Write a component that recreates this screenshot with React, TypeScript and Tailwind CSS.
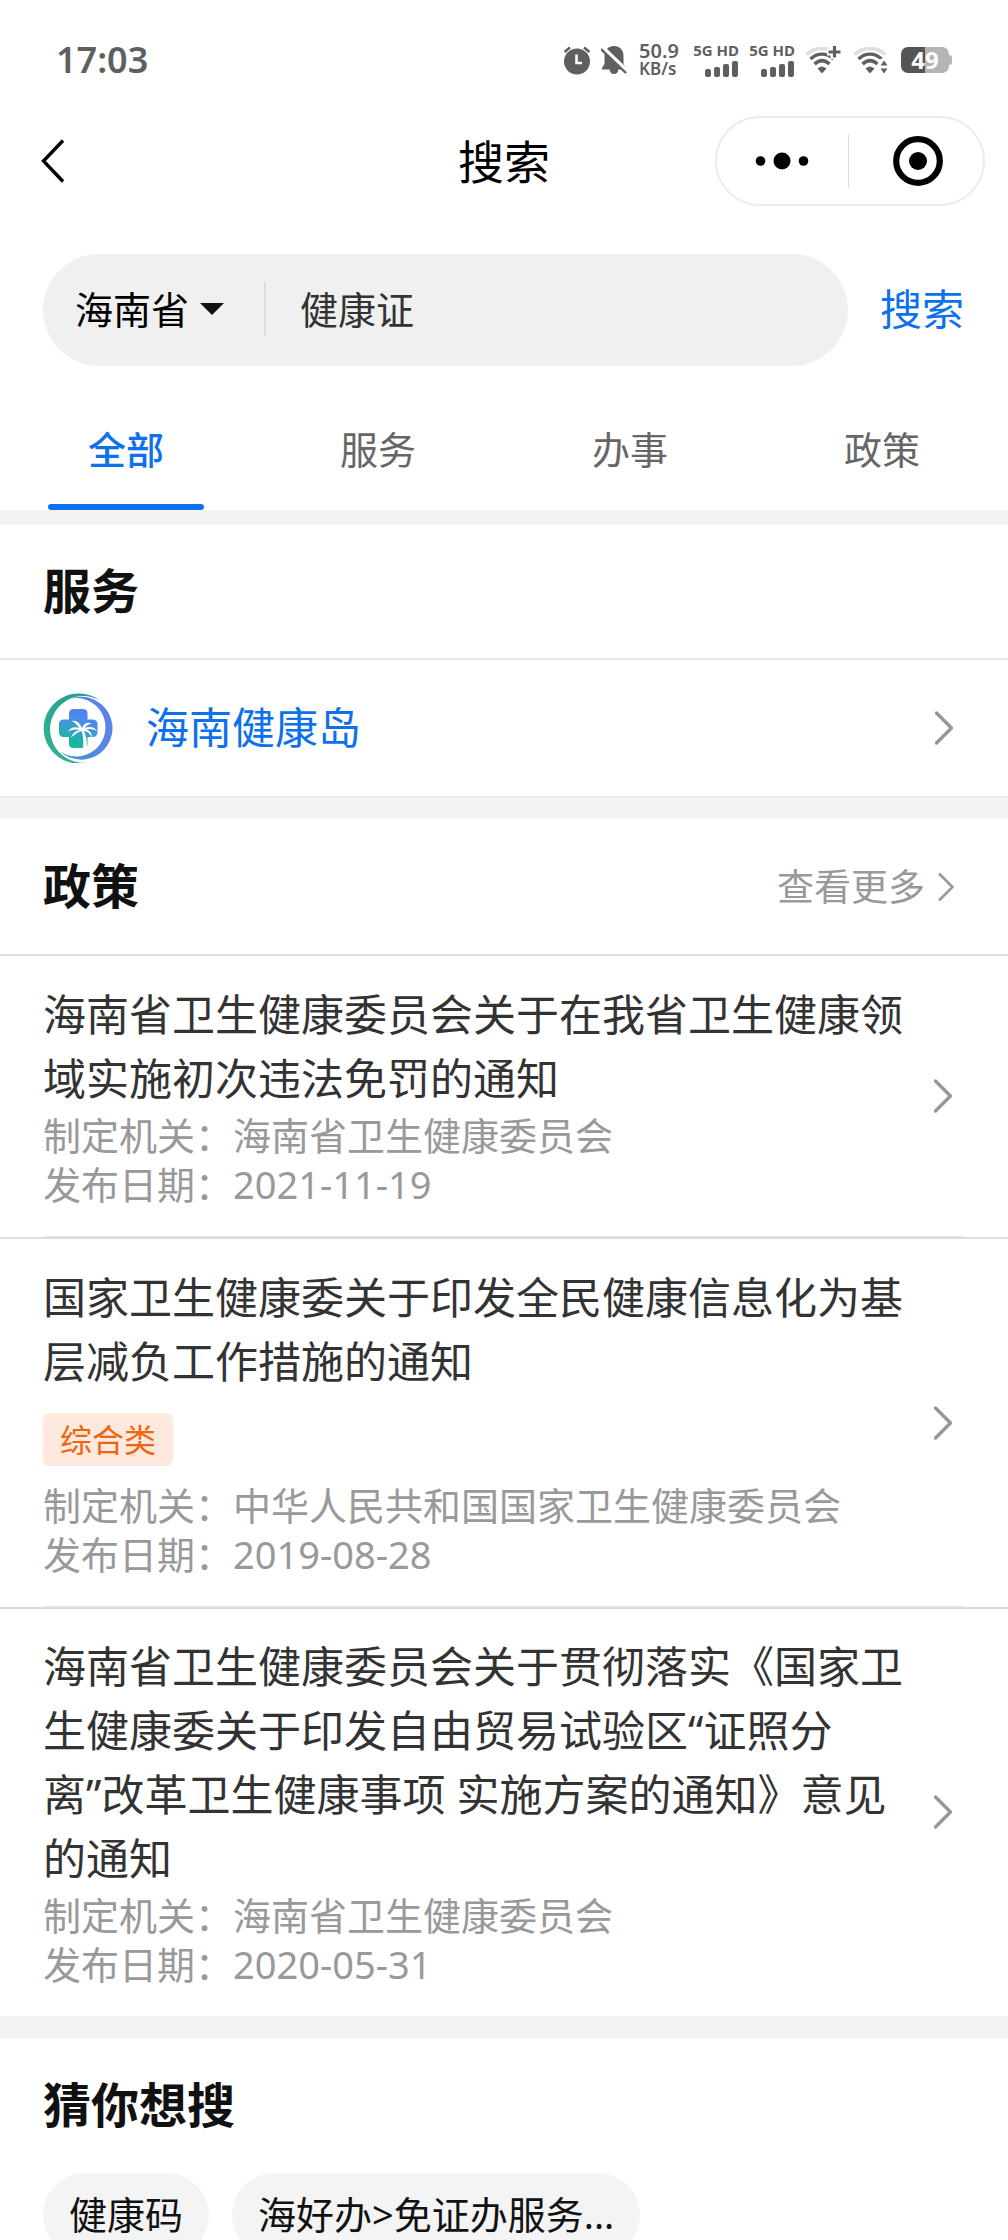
import { useState } from 'react'

type Policy = {
  title: string
  tag?: string
  agency: string
  date: string
}

const TABS = ['全部', '服务', '办事', '政策']

// The word joiner (\u2060) keeps a closing quote on the same line as the text after it.
const POLICIES: Policy[] = [
  {
    title: '海南省卫生健康委员会关于在我省卫生健康领域实施初次违法免罚的通知',
    agency: '海南省卫生健康委员会',
    date: '2021-11-19',
  },
  {
    title: '国家卫生健康委关于印发全民健康信息化为基层减负工作措施的通知',
    tag: '综合类',
    agency: '中华人民共和国国家卫生健康委员会',
    date: '2019-08-28',
  },
  {
    title:
      '海南省卫生健康委员会关于贯彻落实《国家卫生健康委关于印发自由贸易试验区“证照分离”\u2060改革卫生健康事项 实施方案的通知》意见的通知',
    agency: '海南省卫生健康委员会',
    date: '2020-05-31',
  },
]

const SUGGESTIONS = ['健康码', '海好办>免证办服务...']

function AlarmIcon() {
  return (
    <svg className="h-8 w-7" viewBox="0 0 28 32" fill="none" aria-hidden="true">
      <circle cx="14" cy="17.500" r="13" fill="#5f5f5f" />
      <path d="M1.500 8 7 3.500M26.500 8 21 3.500" stroke="#5f5f5f" strokeWidth="2.500" />
      <path d="M13.500 10.500v8.500H19" stroke="#fff" strokeWidth="2.600" />
    </svg>
  )
}

function MutedBellIcon() {
  return (
    <svg className="h-8 w-7" viewBox="0 0 28 32" fill="none" aria-hidden="true">
      <path
        d="M13 2C7.500 2 3.500 6 3.500 11.500V20L1 24v1.500h7.500c.5 3 2.200 4.500 4.500 4.500s4-1.500 4.500-4.500H25V24l-2.500-4v-8.500C22.500 6 18.500 2 13 2Z"
        fill="#5f5f5f"
      />
      <path d="M1 3.500 26 27.500" stroke="#fff" strokeWidth="5" />
      <path d="M0 5 25 29" stroke="#5f5f5f" strokeWidth="2.400" />
    </svg>
  )
}

function CellSignal() {
  return (
    <div className="flex w-[46px] flex-col items-end gap-1">
      <span className="text-[15px] leading-[14px] font-bold whitespace-nowrap">5G HD</span>
      <svg className="h-4 w-[34px]" viewBox="0 0 34 16" fill="#5f5f5f" aria-hidden="true">
        <rect x="0" y="8" width="6" height="8" rx="2" />
        <rect x="9" y="6" width="6" height="10" rx="2" />
        <rect x="18" y="3" width="6" height="13" rx="2" />
        <rect x="27" y="0" width="6" height="16" rx="2" />
      </svg>
    </div>
  )
}

function WifiIcon({ badge }: { badge: 'plus' | 'arrows' }) {
  return (
    <svg className="h-8 w-[38px]" viewBox="0 0 38 32" fill="none" aria-hidden="true">
      <path d="M1.500 10.500C10 2.500 24 2.500 32.500 10.500" stroke="#dedede" strokeWidth="3.600" />
      <path d="M5.500 15C12.500 8.500 21.500 8.500 28.500 15" stroke="#5f5f5f" strokeWidth="3.400" />
      <path d="M9.500 20C14.500 15.500 19.500 15.500 24.500 20" stroke="#5f5f5f" strokeWidth="3.400" />
      <path d="M12.500 24.500C15.500 22 18.500 22 21.500 24.500L17 29.500Z" fill="#5f5f5f" />
      {badge === 'plus' ? (
        <>
          <path d="M29 1v14M22 8h13" stroke="#fff" strokeWidth="7" />
          <path d="M29.500 2v11.500M23.500 8h12" stroke="#5f5f5f" strokeWidth="3.200" />
        </>
      ) : (
        <>
          <path d="M25 15h11v16H25Z" fill="#fff" />
          <path d="M31 16.500 34.500 21.500h-7ZM31 29.500 27.500 24.500h7Z" fill="#5f5f5f" />
        </>
      )}
    </svg>
  )
}

function Battery() {
  return (
    <div className="flex items-center">
      <div className="flex h-[26px] w-12 items-center justify-center rounded-[7px] bg-linear-to-r from-[#555] from-50% to-[#b4b4b4] to-50% text-[24px] leading-[26px] font-bold text-white">
        49
      </div>
      <div className="h-2.5 w-[3px] rounded-r bg-[#b4b4b4]" />
    </div>
  )
}

function StatusBar() {
  return (
    <div className="flex h-[116px] items-center justify-between px-14 pt-1 text-[#5f5f5f]">
      <time className="text-[36px] leading-10 font-semibold">17:03</time>
      <div className="flex items-center gap-2.5">
        <AlarmIcon />
        <MutedBellIcon />
        <div className="flex w-11 flex-col items-start text-[20px] leading-[18px] font-semibold">
          <span>50.9</span>
          <span className="text-[17px]">KB/s</span>
        </div>
        <CellSignal />
        <CellSignal />
        <WifiIcon badge="plus" />
        <WifiIcon badge="arrows" />
        <Battery />
      </div>
    </div>
  )
}

function NavBar() {
  return (
    <header className="grid h-[90px] grid-cols-[1fr_auto_1fr] items-center px-[23px]">
      <button type="button" aria-label="返回" className="justify-self-start pl-[18px]">
        <svg className="h-11 w-6" viewBox="0 0 24 44" fill="none" aria-hidden="true">
          <path d="M22 1.500 2.500 22 22 42.500" stroke="#000" strokeWidth="3.400" />
        </svg>
      </button>
      <h1 className="text-[46px] leading-[64px] text-black">搜索</h1>
      <div className="flex h-[90px] w-[270px] items-center justify-self-end rounded-full border-2 border-[#ececec]">
        <button type="button" aria-label="更多" className="flex flex-1 justify-center">
          <svg className="h-5 w-[54px]" viewBox="0 0 54 20" aria-hidden="true">
            <circle cx="5.500" cy="10" r="4.800" />
            <circle cx="27" cy="10" r="8.500" />
            <circle cx="48.500" cy="10" r="4.800" />
          </svg>
        </button>
        <span className="h-[54px] w-px bg-[#dcdcdc]" />
        <button type="button" aria-label="关闭" className="flex flex-1 justify-center pl-1">
          <svg className="h-[50px] w-[50px]" viewBox="0 0 50 50" aria-hidden="true">
            <circle cx="25" cy="25" r="21.800" fill="none" stroke="#000" strokeWidth="6.200" />
            <circle cx="25" cy="25" r="9" />
          </svg>
        </button>
      </div>
    </header>
  )
}

function SearchBar() {
  const [query, setQuery] = useState('健康证')
  return (
    <form
      className="mt-12 flex items-center gap-8 pr-11 pl-[43px]"
      onSubmit={(e) => e.preventDefault()}
    >
      <div className="flex h-28 min-w-0 flex-1 items-center rounded-full bg-[#f0f0f0] px-8 pb-0.5">
        <select
          aria-label="地区"
          className="appearance-none bg-transparent text-[38px] leading-[54px] text-black outline-none"
        >
          <option>海南省</option>
        </select>
        <svg className="ml-2.5 h-3 w-6" viewBox="0 0 24 12" aria-hidden="true">
          <path d="M0 0h24L12 12Z" fill="#111" />
        </svg>
        <span className="ml-10 h-[54px] w-0.5 bg-[#dcdcdc]" />
        <input
          type="text"
          aria-label="搜索内容"
          value={query}
          onChange={(e) => setQuery(e.target.value)}
          className="ml-[34px] h-[54px] min-w-0 flex-1 bg-transparent text-[38px] leading-[54px] text-[#333] outline-none"
        />
      </div>
      <button type="submit" className="pb-0.5 text-[42px] leading-[60px] text-[#0d70ec]">
        搜索
      </button>
    </form>
  )
}

function Tabs() {
  const [active, setActive] = useState(TABS[0])
  return (
    <div role="tablist" className="mt-6 grid grid-cols-4 border-b-[15px] border-[#f3f3f3]">
      {TABS.map((tab) => {
        const on = tab === active
        return (
          <button
            key={tab}
            type="button"
            role="tab"
            aria-selected={on}
            onClick={() => setActive(tab)}
            className="flex h-[120px] flex-col items-center justify-end"
          >
            <span
              className={
                on
                  ? 'pb-7 text-[38px] leading-[54px] font-medium text-[#0d70ec]'
                  : 'pb-7 text-[38px] leading-[54px] text-[#666]'
              }
            >
              {tab}
            </span>
            <span
              className={on ? 'h-1.5 w-[156px] rounded-full bg-[#0d70ec]' : 'h-1.5 w-[156px]'}
            />
          </button>
        )
      })}
    </div>
  )
}

function Chevron() {
  return (
    <svg className="h-[34px] w-[18px] shrink-0" viewBox="0 0 18 34" fill="none" aria-hidden="true">
      <path
        d="M1.500 2 16.500 17 1.500 32"
        stroke="#969696"
        strokeWidth="3.400"
        strokeLinecap="round"
        strokeLinejoin="round"
      />
    </svg>
  )
}

function HealthIslandLogo() {
  return (
    <svg className="h-[70px] w-[70px] shrink-0" viewBox="0 0 70 70" fill="none" aria-hidden="true">
      <defs>
        <linearGradient id="cross" x1="42" y1="16" x2="28" y2="54" gradientUnits="userSpaceOnUse">
          <stop offset="0.200" stopColor="#4f86ee" />
          <stop offset="0.500" stopColor="#3c9bd4" />
          <stop offset="0.900" stopColor="#14b89a" />
        </linearGradient>
        <linearGradient id="left" x1="50" y1="5" x2="10" y2="60" gradientUnits="userSpaceOnUse">
          <stop stopColor="#27a08c" />
          <stop offset="1" stopColor="#2fb193" />
        </linearGradient>
        <linearGradient id="right" x1="60" y1="10" x2="20" y2="62" gradientUnits="userSpaceOnUse">
          <stop offset="0.300" stopColor="#5b82e8" />
          <stop offset="1" stopColor="#4a8fd8" />
        </linearGradient>
      </defs>
      <path d="M56 7A35 35 0 1 0 44 69.500A33.300 33.300 0 1 1 56 7Z" fill="url(#left)" />
      <path d="M28 5.500A31.400 31.400 0 1 1 17 58.500A29.200 29.200 0 1 0 28 5.500Z" fill="url(#right)" />
      <path
        d="M31 16h9q4.500 0 4.500 4.500v6h5q5 0 5 5v7.500q0 5-5 5h-5v7q0 4-4.500 4h-9q-5 0-5-4v-7h-5q-5 0-5-5v-7.500q0-5 5-5h5v-6Q26 16 31 16Z"
        fill="url(#cross)"
      />
      <path
        d="M39 35Q35 26 28.500 28Q33 29.500 36 35Q29 32.500 25 38.500Q31 35.500 37 37Q30 38 28 45Q33 39.500 38.500 38Q41 44 40 56H44Q44 44 41 38Q46 38.500 49 44.500Q49 38 43 36.500Q49 35 54 38Q50 32 42 35Q44 31 49 30.500Q42 28 39 35Z"
        fill="#fff"
      />
    </svg>
  )
}

function PolicyRow({ policy, last }: { policy: Policy; last: boolean }) {
  return (
    <li className={last ? 'px-[43px]' : 'border-b-2 border-[#dedede] px-[43px]'}>
      <a
        href="#policy"
        className={
          last
            ? 'flex items-center gap-[22px] pt-[26px] pr-[13px] pb-[27px]'
            : 'flex items-center gap-[22px] border-b border-[#e6e6e6] py-[27px] pr-[13px]'
        }
      >
        <div className="min-w-0 flex-1">
          <h3 className="text-[43px] leading-[64px] text-[#333]">{policy.title}</h3>
          {policy.tag && (
            <span className="mt-[19px] mb-[15px] block w-fit rounded-md bg-[#fee9de] px-[17px] text-[32px] leading-[53px] text-[#ee6410]">
              {policy.tag}
            </span>
          )}
          <p className="text-[38px] leading-[49px] text-[#999]">制定机关：{policy.agency}</p>
          <p className="text-[38px] leading-[49px] text-[#999]">发布日期：{policy.date}</p>
        </div>
        <Chevron />
      </a>
    </li>
  )
}

function SectionTitle({ children }: { children: string }) {
  return <h2 className="pb-0.5 text-[48px] leading-[64px] font-bold text-[#111]">{children}</h2>
}

export default function App() {
  return (
    <div
      lang="zh-CN"
      className="h-screen overflow-hidden bg-white font-['Noto_Sans','Noto_Sans_CJK_SC',sans-serif]"
    >
      <StatusBar />
      <NavBar />
      <SearchBar />
      <Tabs />

      <section>
        <div className="flex h-[135px] items-center border-b-2 border-[#e8e8e8] px-[43px]">
          <SectionTitle>服务</SectionTitle>
        </div>
        <a
          href="#service"
          className="flex h-[137px] items-center border-b border-[#e6e6e6] pr-[55px] pl-[43px]"
        >
          <HealthIslandLogo />
          <span className="ml-[33px] flex-1 text-[43px] leading-[64px] text-[#0d70ec]">
            海南健康岛
          </span>
          <Chevron />
        </a>
      </section>

      <section className="border-t-[22px] border-[#f3f3f3]">
        <div className="flex h-[137px] items-center justify-between border-b-2 border-[#dedede] pr-[53px] pl-[43px]">
          <SectionTitle>政策</SectionTitle>
          <a href="#more" className="flex items-center gap-3 text-[37px] leading-[54px] text-[#999]">
            查看更多
            <svg className="h-[30px] w-[18px]" viewBox="0 0 18 30" fill="none" aria-hidden="true">
              <path d="M2 1.500 15.500 15 2 28.500" stroke="#999" strokeWidth="2.600" />
            </svg>
          </a>
        </div>
        <ul>
          {POLICIES.map((policy, i) => (
            <PolicyRow key={policy.date} policy={policy} last={i === POLICIES.length - 1} />
          ))}
        </ul>
      </section>

      <section className="border-t-[22px] border-[#f3f3f3]">
        <div className="flex h-[135px] items-center px-[43px]">
          <SectionTitle>猜你想搜</SectionTitle>
        </div>
        <div className="flex flex-wrap gap-[23px] px-[43px]">
          {SUGGESTIONS.map((text) => (
            <button
              key={text}
              type="button"
              className="h-[84px] rounded-full bg-[#f4f4f4] px-[26px] pb-0.5 text-[38px] leading-[54px] text-[#111]"
            >
              {text}
            </button>
          ))}
        </div>
      </section>
    </div>
  )
}
